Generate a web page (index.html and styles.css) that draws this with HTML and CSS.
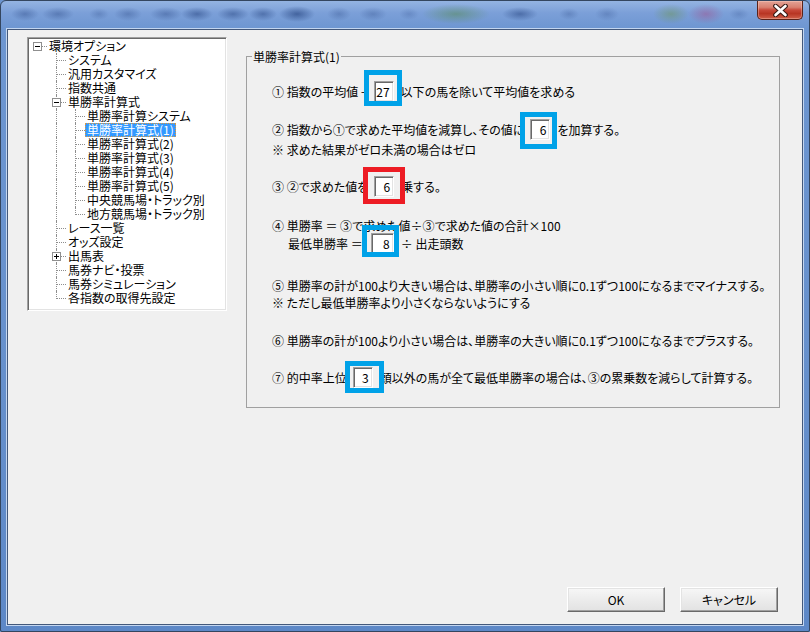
FILE: index.html
```html
<!DOCTYPE html>
<html lang="ja">
<head>
<meta charset="utf-8">
<title>環境オプション</title>
<link rel="stylesheet" href="styles.css">
</head>
<body>
<div class="window">
  <div class="titlebar">
    <button class="close" aria-label="閉じる">
      <svg width="15" height="13" viewBox="0 0 15 13">
        <path d="M2.5 2 L12.5 11 M12.5 2 L2.5 11" stroke="#3a1b16" stroke-width="4.8" stroke-linecap="round" fill="none"/>
        <path d="M2.5 2 L12.5 11 M12.5 2 L2.5 11" stroke="#ffffff" stroke-width="2.6" stroke-linecap="round" fill="none"/>
      </svg>
    </button>
  </div>
  <div class="client">
    <div class="main">
      <div class="tree">
        <div class="row"><span class="g root"><i class="exp"></i></span><span class="lbl">環境オプション</span></div>
        <div class="row"><span class="g"></span><span class="g t"></span><span class="lbl">システム</span></div>
        <div class="row"><span class="g"></span><span class="g t"></span><span class="lbl">汎用カスタマイズ</span></div>
        <div class="row"><span class="g"></span><span class="g t"></span><span class="lbl">指数共通</span></div>
        <div class="row"><span class="g"></span><span class="g t"><i class="exp"></i></span><span class="lbl">単勝率計算式</span></div>
        <div class="row"><span class="g"></span><span class="g v"></span><span class="g t"></span><span class="lbl">単勝率計算システム</span></div>
        <div class="row"><span class="g"></span><span class="g v"></span><span class="g t"></span><span class="lbl sel">単勝率計算式(1)</span></div>
        <div class="row"><span class="g"></span><span class="g v"></span><span class="g t"></span><span class="lbl">単勝率計算式(2)</span></div>
        <div class="row"><span class="g"></span><span class="g v"></span><span class="g t"></span><span class="lbl">単勝率計算式(3)</span></div>
        <div class="row"><span class="g"></span><span class="g v"></span><span class="g t"></span><span class="lbl">単勝率計算式(4)</span></div>
        <div class="row"><span class="g"></span><span class="g v"></span><span class="g t"></span><span class="lbl">単勝率計算式(5)</span></div>
        <div class="row"><span class="g"></span><span class="g v"></span><span class="g t"></span><span class="lbl">中央競馬場・トラック別</span></div>
        <div class="row"><span class="g"></span><span class="g v"></span><span class="g l"></span><span class="lbl">地方競馬場・トラック別</span></div>
        <div class="row"><span class="g"></span><span class="g t"></span><span class="lbl">レース一覧</span></div>
        <div class="row"><span class="g"></span><span class="g t"></span><span class="lbl">オッズ設定</span></div>
        <div class="row"><span class="g"></span><span class="g t"><i class="exp plus"></i></span><span class="lbl">出馬表</span></div>
        <div class="row"><span class="g"></span><span class="g t"></span><span class="lbl">馬券ナビ・投票</span></div>
        <div class="row"><span class="g"></span><span class="g t"></span><span class="lbl">馬券シミュレーション</span></div>
        <div class="row"><span class="g"></span><span class="g l"></span><span class="lbl">各指数の取得先設定</span></div>
      </div>

      <fieldset class="group">
        <legend>単勝率計算式(1)</legend>
        <div class="body">
          <div class="line h22"><span>① 指数の平均値 −</span><span class="field m1">27</span><span>以下の馬を除いて平均値を求める</span></div>
          <div class="line h22 mt16"><span>② 指数から①で求めた平均値を減算し、その値に</span><span class="field m2">6</span><span>を加算する。</span></div>
          <div class="line h16 mt1"><span>※ 求めた結果がゼロ未満の場合はゼロ</span></div>
          <div class="line h22 mt18"><span>③ ②で求めた値を</span><span class="field m3">6</span><span>乗する。</span></div>
          <div class="line h16 mt20"><span>④ 単勝率 ＝ ③で求めた値÷③で求めた値の合計×100</span></div>
          <div class="line h20 indent"><span>最低単勝率 ＝</span><span class="field wide m4">8</span><span>÷ 出走頭数</span></div>
          <div class="line h17 mt24"><span>⑤ 単勝率の計が100より大きい場合は、単勝率の小さい順に0.1ずつ100になるまでマイナスする。</span></div>
          <div class="line h16"><span>※ ただし最低単勝率より小さくならないようにする</span></div>
          <div class="line h16 mt22"><span>⑥ 単勝率の計が100より小さい場合は、単勝率の大きい順に0.1ずつ100になるまでプラスする。</span></div>
          <div class="line h22 mt18"><span>⑦ 的中率上位</span><span class="field m5">3</span><span>頭以外の馬が全て最低単勝率の場合は、③の累乗数を減らして計算する。</span></div>
        </div>
      </fieldset>
    </div>

    <div class="buttons">
      <button class="btn">OK</button>
      <button class="btn">キャンセル</button>
    </div>
  </div>
</div>
</body>
</html>
```

FILE: styles.css
```css
* { box-sizing: border-box; }

html, body {
  margin: 0;
  padding: 0;
  width: 810px;
  height: 632px;
  overflow: hidden;
  background: #6b94cf;
}

body {
  font-family: "Noto Sans CJK JP", "Noto Sans", sans-serif;
  font-size: 12px;
  font-feature-settings: "palt";
  color: #000;
}

.window {
  width: 810px;
  height: 632px;
  display: flex;
  flex-direction: column;
  padding: 0 6px 6px 6px;
  border: 1px solid #34465f;
  border-radius: 6px 6px 2px 2px;
  background: linear-gradient(180deg, #94b4e2 0px, #7b9fd8 12px, #6d96d1 28px, #6690cc 60%, #5d88c7 100%);
}

.titlebar {
  height: 28px;
  flex: none;
  display: flex;
  justify-content: flex-end;
  align-items: flex-start;
  margin: 0 -6px;
  padding: 0 6px;
  background:
    radial-gradient(ellipse 14px 7px at 24px 13px, rgba(50,80,140,.45), transparent),
    radial-gradient(ellipse 16px 7px at 57px 13px, rgba(50,80,140,.45), transparent),
    radial-gradient(ellipse 10px 6px at 98px 13px, rgba(50,80,140,.3), transparent),
    radial-gradient(ellipse 14px 7px at 127px 13px, rgba(50,80,140,.4), transparent),
    radial-gradient(ellipse 16px 7px at 165px 13px, rgba(50,80,140,.45), transparent),
    radial-gradient(ellipse 16px 7px at 196px 13px, rgba(40,70,130,.55), transparent),
    radial-gradient(ellipse 16px 7px at 232px 13px, rgba(40,70,130,.5), transparent),
    radial-gradient(ellipse 14px 7px at 262px 13px, rgba(40,70,130,.5), transparent),
    radial-gradient(ellipse 18px 8px at 296px 13px, rgba(30,60,120,.6), transparent),
    radial-gradient(ellipse 12px 7px at 338px 13px, rgba(50,80,140,.35), transparent),
    radial-gradient(ellipse 14px 7px at 372px 13px, rgba(50,80,140,.35), transparent),
    radial-gradient(ellipse 10px 6px at 408px 13px, rgba(50,80,140,.25), transparent),
    radial-gradient(ellipse 34px 10px at 455px 13px, rgba(90,140,100,.6), transparent),
    radial-gradient(ellipse 18px 7px at 519px 13px, rgba(40,70,130,.55), transparent),
    radial-gradient(ellipse 10px 6px at 568px 13px, rgba(50,80,140,.3), transparent),
    radial-gradient(ellipse 12px 7px at 606px 13px, rgba(50,80,140,.3), transparent),
    radial-gradient(ellipse 18px 10px at 670px 13px, rgba(110,150,110,.6), transparent),
    radial-gradient(ellipse 18px 10px at 705px 13px, rgba(150,100,160,.65), transparent),
    radial-gradient(ellipse 10px 6px at 738px 13px, rgba(50,80,140,.25), transparent);
}

.close {
  width: 46px;
  height: 19px;
  margin: 0;
  padding: 0;
  display: flex;
  align-items: center;
  justify-content: center;
  border: 1px solid #5a2219;
  border-top: none;
  border-radius: 0 0 5px 5px;
  background: linear-gradient(180deg, #e3a396 0%, #d88070 35%, #c8493a 50%, #b83523 70%, #d0604a 100%);
  box-shadow: inset 0 0 0 1px rgba(255,220,210,.35);
}

.client {
  flex: 1;
  display: flex;
  flex-direction: column;
  background: #f0f0f0;
  border: 1px solid #43587a;
  box-shadow: 0 0 0 1px #c3d6f0;
}

.main {
  display: flex;
  align-items: flex-start;
  gap: 19px;
  padding: 7px 0 0 19px;
}

/* ---------- tree ---------- */
.tree {
  width: 200px;
  height: 274px;
  flex: none;
  padding-top: 1px;
  background: #fff;
  border: 1px solid;
  border-color: #a0a0a0 #ffffff #ffffff #a0a0a0;
  box-shadow: inset 1px 1px 0 #696969, inset -1px -1px 0 #e3e3e3;
}

.row {
  height: 14px;
  display: flex;
  align-items: center;
}

.g {
  flex: none;
  width: 19px;
  height: 14px;
  position: relative;
}

.g.t::before, .g.v::before, .g.l::before {
  content: "";
  position: absolute;
  left: 9px;
  top: 0;
  height: 14px;
  border-left: 1px dotted #8e8e8e;
}

.g.l::before { height: 8px; }

.g.t::after, .g.l::after, .g.root::after {
  content: "";
  position: absolute;
  left: 10px;
  top: 7px;
  width: 9px;
  border-top: 1px dotted #8e8e8e;
}

.exp {
  position: absolute;
  left: 5px;
  top: 3px;
  width: 9px;
  height: 9px;
  z-index: 1;
  background: #fff;
  border: 1px solid #8f8f8f;
}

.exp::before {
  content: "";
  position: absolute;
  left: 1px;
  top: 3px;
  width: 5px;
  height: 1px;
  background: #000;
}

.exp.plus::after {
  content: "";
  position: absolute;
  left: 3px;
  top: 1px;
  width: 1px;
  height: 5px;
  background: #000;
}

.lbl {
  display: block;
  height: 14px;
  line-height: 12px;
  padding: 0 1px;
  border: 1px solid transparent;
  white-space: nowrap;
}

.lbl.sel {
  background: #3399ff;
  color: #fff;
  border: 1px dotted #e39a3c;
}

/* ---------- group box ---------- */
.group {
  width: 534px;
  flex: none;
  margin: 13px 0 0 0;
  padding: 0;
  min-width: 0;
  border: 1px solid #a0a0a0;
}

.group legend {
  margin-left: 5px;
  padding: 0 1px;
  line-height: 13px;
  font-size: 12px;
}

.body {
  padding: 17px 0 19px 25px;
}

.line {
  display: flex;
  align-items: center;
  white-space: nowrap;
}

.indent { padding-left: 16px; }

.h16 { height: 16px; }
.h17 { height: 17px; }
.h20 { height: 20px; }
.h22 { height: 22px; }

.mt1 { margin-top: 1px; }
.mt16 { margin-top: 16px; }
.mt18 { margin-top: 18px; }
.mt20 { margin-top: 20px; }
.mt22 { margin-top: 22px; }
.mt24 { margin-top: 24px; }

.field {
  position: relative;
  flex: none;
  width: 20px;
  height: 21px;
  margin: 0 7px 0 6px;
  padding-right: 3px;
  text-align: right;
  line-height: 19px;
  background: #fff;
  border: 1px solid;
  border-color: #a0a0a0 #ffffff #ffffff #a0a0a0;
  box-shadow: inset 1px 1px 0 #696969, inset -1px -1px 0 #e3e3e3;
  font-feature-settings: normal;
}

.field.wide { width: 23px; margin-left: 8px; }

.field::after {
  content: "";
  position: absolute;
  border: 5px solid #00a2e8;
}

.field.m1::after { top: -12px; left: -11px; right: -9px; bottom: -5px; }
.field.m2::after { top: -8px; left: -11px; right: -8px; bottom: -10px; }
.field.m3::after { top: -10px; left: -12px; right: -12px; bottom: -8px; border-color: #ed1c24; }
.field.m4::after { top: -9px; left: -10px; right: -6px; bottom: -4px; }
.field.m5::after { top: -7px; left: -9px; right: -12px; bottom: -6px; }

/* ---------- buttons ---------- */
.buttons {
  margin-top: auto;
  display: flex;
  justify-content: flex-end;
  gap: 15px;
  padding: 0 24px 12px 0;
}

.btn {
  width: 98px;
  height: 25px;
  padding: 0;
  font-family: "Noto Sans CJK JP", "Noto Sans", sans-serif;
  font-size: 12px;
  font-feature-settings: "palt";
  color: #000;
  background: linear-gradient(180deg, #f7f7f7 0%, #ececec 50%, #e2e2e2 100%);
  border: 1px solid;
  border-color: #ffffff #696969 #696969 #ffffff;
  box-shadow: inset -1px -1px 0 #a0a0a0, inset 1px 1px 0 #e3e3e3;
}
```
